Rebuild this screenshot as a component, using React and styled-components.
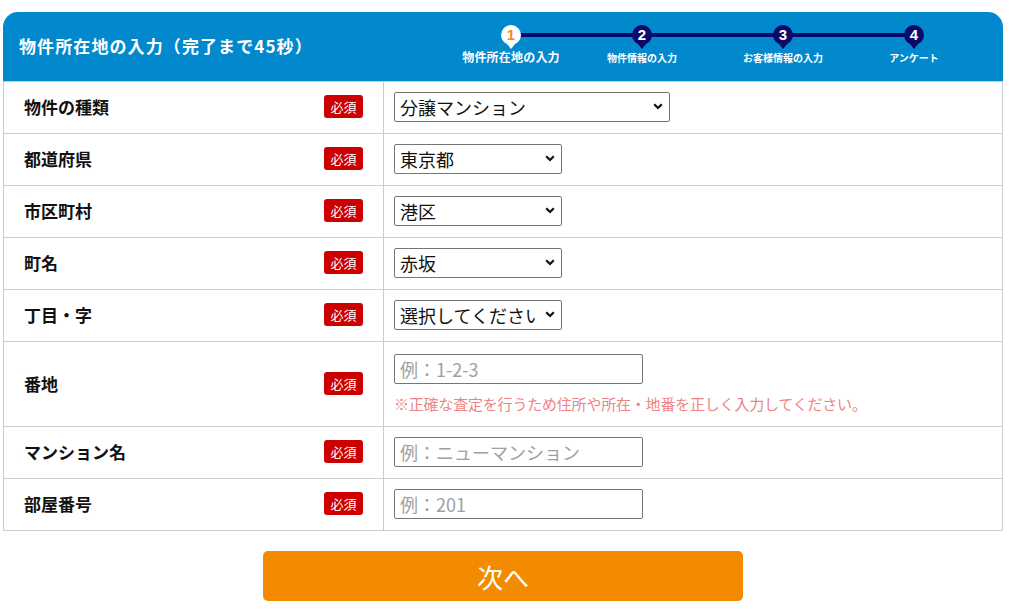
import React from 'react';
import styled, { createGlobalStyle } from 'styled-components';

const GlobalStyle = createGlobalStyle`
  body {
    margin: 0;
    background: #ffffff;
    font-family: "Noto Sans CJK JP", "Noto Sans", sans-serif;
    color: #111;
  }
`;

const Page = styled.div`
  padding: 12px 13px 0 3px;
`;

const Card = styled.div`
  width: 1000px;
`;

const Header = styled.div`
  height: 69px;
  background: #0288cc;
  border-radius: 15px 15px 0 0;
  display: flex;
  align-items: center;
  padding-left: 16px;
`;

const Title = styled.h1`
  margin: 0;
  width: 432px;
  color: #fff;
  font-size: 17px;
  font-weight: 700;
  letter-spacing: 1.1px;
  padding-bottom: 2px;
`;

const Stepper = styled.div`
  position: relative;
  display: flex;
  align-self: stretch;
`;

const StepLine = styled.div`
  position: absolute;
  left: 60px;
  right: 60px;
  top: 21px;
  height: 4px;
  background: #0b0a6a;
`;

const Step = styled.div`
  position: relative;
  width: 120px;
  margin-left: ${p => p.$gap}px;
  display: flex;
  flex-direction: column;
  align-items: center;
  padding-top: 13px;
`;

const Pin = styled.div`
  position: relative;
  width: 20px;
  height: 20px;
  border-radius: 50%;
  background: ${p => (p.$active ? '#ffffff' : '#0b0a6a')};
  color: ${p => (p.$active ? '#f5882a' : '#ffffff')};
  font-family: "Liberation Sans", Arial, sans-serif;
  font-weight: 700;
  font-size: 15px;
  line-height: 20px;
  text-align: center;

  &::after {
    content: '';
    position: absolute;
    left: 50%;
    bottom: -4px;
    margin-left: -4px;
    border-left: 4px solid transparent;
    border-right: 4px solid transparent;
    border-top: 5px solid ${p => (p.$active ? '#ffffff' : '#0b0a6a')};
  }
`;

const StepLabel = styled.div`
  margin-top: ${p => (p.$active ? '3px' : '5px')};
  color: #fff;
  font-size: ${p => (p.$active ? '12px' : '10px')};
  font-weight: 700;
  letter-spacing: ${p => (p.$active ? '0.2px' : '0')};
  white-space: nowrap;
`;

const Table = styled.div`
  border: 1px solid #cccccc;
`;

const Row = styled.div`
  display: flex;
  min-height: ${p => p.$tall ? 84 : 51}px;
  border-top: ${p => (p.$first ? 'none' : '1px solid #cccccc')};
`;

const LabelCell = styled.div`
  width: 380px;
  flex-shrink: 0;
  border-right: 1px solid #cccccc;
  display: flex;
  align-items: center;
  justify-content: space-between;
  padding: 0 20px 2px 20px;
  box-sizing: border-box;
`;

const Label = styled.span`
  font-size: 17px;
  font-weight: 700;
  color: #111;
`;

const Badge = styled.span`
  width: 39px;
  height: 23px;
  background: #cc0000;
  border-radius: 3px;
  color: #fff;
  font-size: 13px;
  line-height: 23px;
  text-align: center;
`;

const FieldCell = styled.div`
  flex: 1;
  display: flex;
  flex-direction: column;
  justify-content: center;
  padding: 0 10px 1px;
`;

const SelectWrap = styled.div`
  position: relative;
  width: ${p => p.$width}px;
`;

const Select = styled.select`
  appearance: none;
  width: 100%;
  height: 30px;
  box-sizing: border-box;
  border: 1px solid #767676;
  border-radius: 2px;
  background: #fff;
  font-family: "Noto Sans CJK JP", "Noto Sans", sans-serif;
  font-size: 18px;
  color: #111;
  padding: 0 24px 0 5px;
  line-height: 28px;
`;

const Chevron = styled.svg`
  position: absolute;
  right: 7px;
  top: 11px;
  pointer-events: none;
`;

const Input = styled.input`
  width: 249px;
  height: 30px;
  box-sizing: border-box;
  border: 1px solid #767676;
  border-radius: 2px;
  font-family: "Noto Sans CJK JP", "Noto Sans", sans-serif;
  font-size: 18px;
  padding: 0 5px;
  color: #111;

  &::placeholder {
    color: #a0a0a0;
  }
`;

const Note = styled.p`
  margin: 9px 0 0 0;
  font-size: 15px;
  letter-spacing: -0.2px;
  color: #f08383;
`;

const ButtonRow = styled.div`
  display: flex;
  justify-content: center;
  padding-top: 20px;
`;

const NextButton = styled.button`
  width: 480px;
  height: 50px;
  border: none;
  border-radius: 5px;
  background: #f28b00;
  color: #fff;
  font-family: "Noto Sans CJK JP", "Noto Sans", sans-serif;
  font-size: 26px;
  cursor: pointer;
`;

const steps = [
  { num: 1, label: '物件所在地の入力', gap: 0 },
  { num: 2, label: '物件情報の入力', gap: 11 },
  { num: 3, label: 'お客様情報の入力', gap: 21 },
  { num: 4, label: 'アンケート', gap: 11 },
];

const selectRows = [
  { label: '物件の種類', value: '分譲マンション', width: 276 },
  { label: '都道府県', value: '東京都', width: 168 },
  { label: '市区町村', value: '港区', width: 168 },
  { label: '町名', value: '赤坂', width: 168 },
  { label: '丁目・字', value: '選択してください', width: 168 },
];

const SelectBox = ({ value, width }) => (
  <SelectWrap $width={width}>
    <Select defaultValue={value}>
      <option>{value}</option>
    </Select>
    <Chevron width="10" height="7" viewBox="0 0 10 7">
      <path d="M1.2 1.2 L5 5 L8.8 1.2" fill="none" stroke="#111" strokeWidth="2.2" />
    </Chevron>
  </SelectWrap>
);

export default function App() {
  return (
    <Page>
      <GlobalStyle />
      <Card>
        <Header>
          <Title>物件所在地の入力（完了まで45秒）</Title>
          <Stepper>
            <StepLine />
            {steps.map(s => (
              <Step key={s.num} $gap={s.gap}>
                <Pin $active={s.num === 1}>{s.num}</Pin>
                <StepLabel $active={s.num === 1}>{s.label}</StepLabel>
              </Step>
            ))}
          </Stepper>
        </Header>
        <Table>
          {selectRows.map((r, i) => (
            <Row key={r.label} $first={i === 0}>
              <LabelCell>
                <Label>{r.label}</Label>
                <Badge>必須</Badge>
              </LabelCell>
              <FieldCell>
                <SelectBox value={r.value} width={r.width} />
              </FieldCell>
            </Row>
          ))}
          <Row $tall>
            <LabelCell>
              <Label>番地</Label>
              <Badge>必須</Badge>
            </LabelCell>
            <FieldCell>
              <Input placeholder="例：1-2-3" />
              <Note>※正確な査定を行うため住所や所在・地番を正しく入力してください。</Note>
            </FieldCell>
          </Row>
          <Row>
            <LabelCell>
              <Label>マンション名</Label>
              <Badge>必須</Badge>
            </LabelCell>
            <FieldCell>
              <Input placeholder="例：ニューマンション" />
            </FieldCell>
          </Row>
          <Row>
            <LabelCell>
              <Label>部屋番号</Label>
              <Badge>必須</Badge>
            </LabelCell>
            <FieldCell>
              <Input placeholder="例：201" />
            </FieldCell>
          </Row>
        </Table>
        <ButtonRow>
          <NextButton>次へ</NextButton>
        </ButtonRow>
      </Card>
    </Page>
  );
}
